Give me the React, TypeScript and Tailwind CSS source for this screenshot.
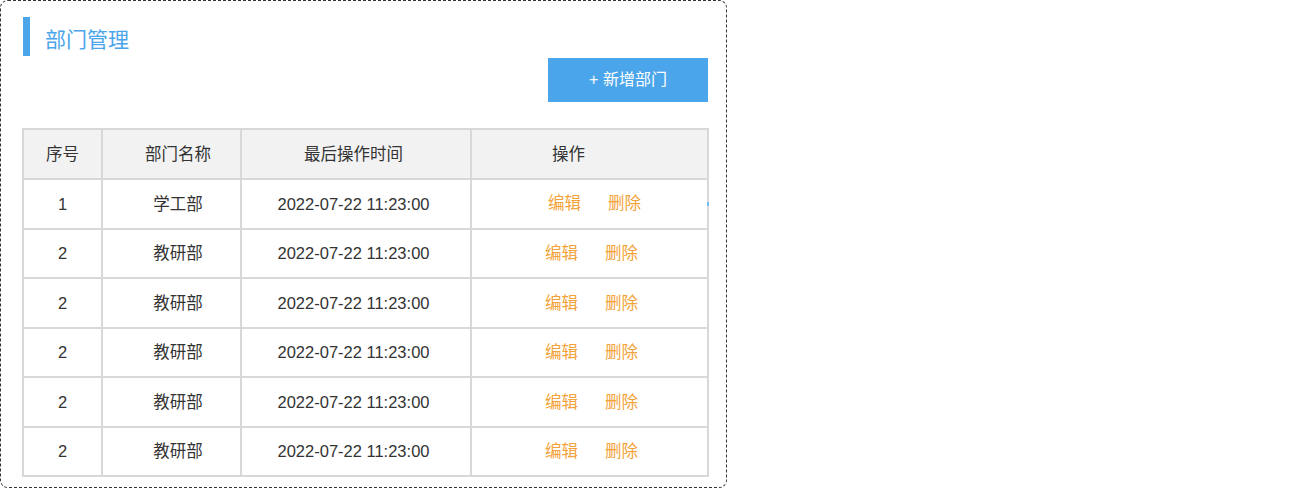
import React from "react";

const rows = [
  { id: "1", name: "学工部", time: "2022-07-22 11:23:00", first: true },
  { id: "2", name: "教研部", time: "2022-07-22 11:23:00" },
  { id: "2", name: "教研部", time: "2022-07-22 11:23:00" },
  { id: "2", name: "教研部", time: "2022-07-22 11:23:00" },
  { id: "2", name: "教研部", time: "2022-07-22 11:23:00" },
  { id: "2", name: "教研部", time: "2022-07-22 11:23:00" },
];

export default function App() {
  return (
    <div
      className="h-[489px] w-[1304px] bg-white text-[#333]"
      style={{ fontFamily: '"Liberation Sans", "Noto Sans CJK SC", sans-serif' }}
    >
      <div className="h-[488px] w-[727px] rounded-lg border border-dashed border-[#333] pl-[21px] pt-[16px]">
        <div className="flex items-center pl-[1px]">
          <div className="h-[39px] w-[7px] bg-[#4ba5ea]" />
          <h1 className="ml-[15px] mt-[6px] text-[21px] leading-none text-[#4ba5ea]">部门管理</h1>
        </div>

        <div className="mt-[2px] flex w-[686px] justify-end">
          <button className="h-[44px] w-[160px] bg-[#4ba5ea] text-[16px] text-white">
            + 新增部门
          </button>
        </div>

        <table className="mt-[26px] w-[685px] table-fixed border-collapse text-[16.5px]">
          <colgroup>
            <col className="w-[79px]" />
            <col className="w-[139px]" />
            <col className="w-[230px]" />
            <col className="w-[237px]" />
          </colgroup>
          <thead>
            <tr className="bg-[#f2f2f2]">
              <th className="h-[50px] border-2 border-[#d8d8d8] p-0 font-normal">序号</th>
              <th className="h-[50px] border-2 border-[#d8d8d8] p-0 pl-[13px] font-normal">部门名称</th>
              <th className="h-[50px] border-2 border-[#d8d8d8] p-0 pr-[5px] font-normal">最后操作时间</th>
              <th className="h-[50px] border-2 border-[#d8d8d8] p-0 pl-[80px] text-left font-normal">操作</th>
            </tr>
          </thead>
          <tbody>
            {rows.map((r, i) => (
              <tr key={i} className={i % 2 === 0 ? "h-[50px]" : "h-[49px]"}>
                <td className="border-2 border-[#d8d8d8] p-0 text-center">{r.id}</td>
                <td className="border-2 border-[#d8d8d8] p-0 pl-[13px] text-center">{r.name}</td>
                <td className="border-2 border-[#d8d8d8] p-0 pr-[5px] text-center">{r.time}</td>
                <td className="relative border-2 border-[#d8d8d8] p-0">
                  <div
                    className={`flex gap-[27px] text-[#f3a33a] ${r.first ? "-mt-[2px] pl-[76px]" : "pl-[73px]"}`}
                  >
                    <span>编辑</span>
                    <span>删除</span>
                  </div>
                  {r.first && (
                    <span className="absolute right-[-2px] top-[22px] h-[4px] w-[2px] bg-[#6fc0ee]" />
                  )}
                </td>
              </tr>
            ))}
          </tbody>
        </table>
      </div>
    </div>
  );
}
